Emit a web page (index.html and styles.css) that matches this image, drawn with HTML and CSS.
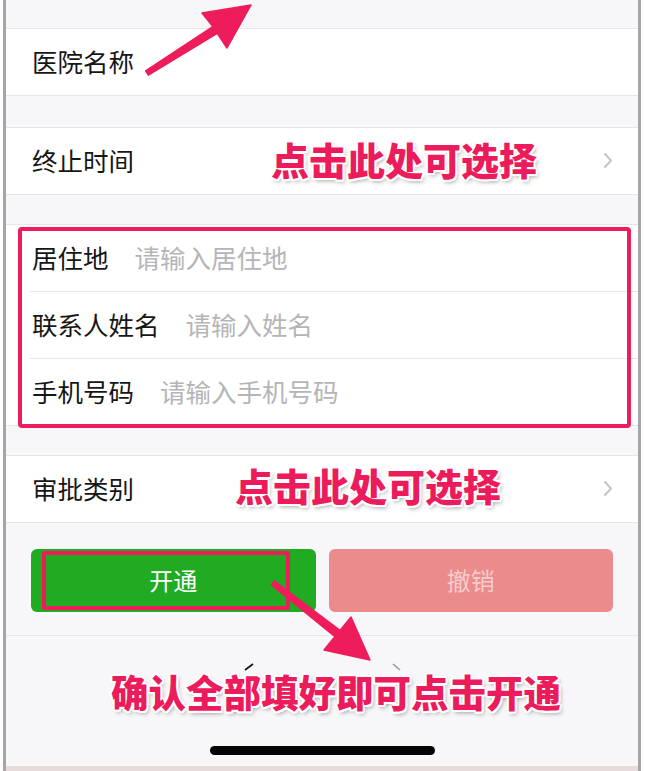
FILE: index.html
```html
<!DOCTYPE html>
<html lang="zh-CN">
<head>
<meta charset="utf-8">
<title>开通</title>
<link rel="stylesheet" href="styles.css">
</head>
<body>
<div class="device">
  <div class="screen">
    <div class="gap gap-top"></div>
    <div class="group">
      <div class="row"><span class="label">医院名称</span></div>
    </div>
    <div class="gap gap-31"></div>
    <div class="group">
      <div class="row"><span class="label">终止时间</span>
        <svg class="chev" width="10" height="17" viewBox="0 0 10 17"><path d="M2 2 L8 8.5 L2 15" fill="none" stroke="#c4c4c8" stroke-width="2" stroke-linecap="round" stroke-linejoin="round"/></svg>
      </div>
    </div>
    <div class="gap gap-29"></div>
    <div class="group">
      <div class="row input-row"><span class="label">居住地</span><span class="placeholder">请输入居住地</span></div>
      <div class="row input-row"><span class="label">联系人姓名</span><span class="placeholder">请输入姓名</span></div>
      <div class="row input-row"><span class="label">手机号码</span><span class="placeholder">请输入手机号码</span></div>
    </div>
    <div class="gap gap-29"></div>
    <div class="group">
      <div class="row"><span class="label">审批类别</span>
        <svg class="chev" width="10" height="17" viewBox="0 0 10 17"><path d="M2 2 L8 8.5 L2 15" fill="none" stroke="#c4c4c8" stroke-width="2" stroke-linecap="round" stroke-linejoin="round"/></svg>
      </div>
    </div>
    <div class="actions">
      <div class="btn btn-ok">开通</div>
      <div class="btn btn-cancel">撤销</div>
    </div>
    <div class="bottom">
      <div class="home-bar"></div>
    </div>
  </div>
  <div class="strip"></div>
</div>

<div class="mark mark-box"></div>
<div class="mark mark-btn"></div>
<div class="note note-1">点击此处可选择</div>
<div class="note note-2">点击此处可选择</div>
<div class="note note-3">确认全部填好即可点击开通</div>
<svg class="arrows" width="645" height="771" viewBox="0 0 645 771">
  <polygon points="145.6,70.9 212.8,26.6 202,13 251,5 227,48 217.2,33.4 148.4,75.1" fill="#ef1c5c" stroke="#ef1c5c" stroke-width="1.5" stroke-linejoin="round"/>
  <polygon points="274.6,581 340,630.4 351,617 370,660 324,650 335,636.6 271.4,585" fill="#ef1c5c" stroke="#ef1c5c" stroke-width="1.5" stroke-linejoin="round"/>
  <line x1="245" y1="670" x2="253" y2="664" stroke="#111" stroke-width="1.6"/>
  <line x1="393" y1="664" x2="400" y2="670" stroke="#9a9a9a" stroke-width="1.6"/>
</svg>
</body>
</html>
```
FILE: styles.css
```css
* { box-sizing: border-box; }
html, body { margin: 0; padding: 0; }
body {
  width: 645px;
  height: 771px;
  position: relative;
  overflow: hidden;
  background: #ffffff;
  font-family: "Noto Sans CJK SC", "Noto Sans", sans-serif;
}
.device {
  margin-left: 3px;
  width: 638px;
  height: 771px;
  border-left: 3px solid #a6a6a6;
  border-right: 3px solid #a6a6a6;
  display: flex;
  flex-direction: column;
}
.screen {
  height: 766px;
  background: #f7f7f9;
  display: flex;
  flex-direction: column;
}
.strip {
  height: 5px;
  background: #e7dbdb;
}
.gap-top { height: 28px; }
.gap-31 { height: 31px; }
.gap-29 { height: 29px; }
.group {
  background: #ffffff;
  border-top: 1px solid #e6e6ea;
  border-bottom: 1px solid #e6e6ea;
}
.row {
  height: 66px;
  display: flex;
  align-items: center;
  padding-left: 26px;
  padding-right: 25px;
  padding-bottom: 4px;
  font-size: 25.5px;
  color: #161616;
}
.input-row + .input-row {
  height: 67px;
  border-top: 1px solid #e6e6ea;
  margin-left: 24px;
  padding-left: 2px;
}
.label { white-space: nowrap; }
.placeholder {
  margin-left: 26px;
  color: #b5b5b8;
}
.chev { margin-left: auto; margin-top: 2px; }
.actions {
  display: flex;
  gap: 13px;
  padding: 26px 25px 23px 25px;
  border-bottom: 1px solid #e6e6ea;
}
.btn {
  flex: 1;
  height: 63px;
  border-radius: 6px;
  display: flex;
  align-items: center;
  justify-content: center;
  padding-bottom: 3px;
  font-size: 24px;
}
.btn-ok { background: #20ab22; color: #ffffff; }
.btn-cancel { background: #eb8b8b; color: #f7cccc; }
.bottom {
  flex: 1;
  display: flex;
  flex-direction: column;
  justify-content: flex-end;
  align-items: center;
  padding-bottom: 11px;
}
.home-bar {
  width: 225px;
  height: 9px;
  border-radius: 5px;
  background: #050505;
}
.mark {
  position: absolute;
  border: 4px solid #ee1c5b;
  border-radius: 4px;
}
.mark-box { left: 18px; top: 227px; width: 613px; height: 201px; }
.mark-btn { left: 42px; top: 551px; width: 248px; height: 59px; border-radius: 2px; }
.note {
  position: absolute;
  font-family: "Noto Sans CJK SC", sans-serif;
  font-weight: 900;
  color: #ec1b5c;
  line-height: 1;
  white-space: nowrap;
  text-shadow:
    2px 0 0 #fff, -2px 0 0 #fff, 0 2px 0 #fff, 0 -2px 0 #fff,
    1.5px 1.5px 0 #fff, -1.5px 1.5px 0 #fff, 1.5px -1.5px 0 #fff, -1.5px -1.5px 0 #fff,
    2px 3px 4px rgba(0, 0, 0, 0.35);
}
.note-1 { left: 271px; top: 140px; font-size: 38px; }
.note-2 { left: 235px; top: 466px; font-size: 38px; }
.note-3 { left: 111px; top: 672px; font-size: 37.5px; }
.arrows { position: absolute; left: 0; top: 0; pointer-events: none; }
```
